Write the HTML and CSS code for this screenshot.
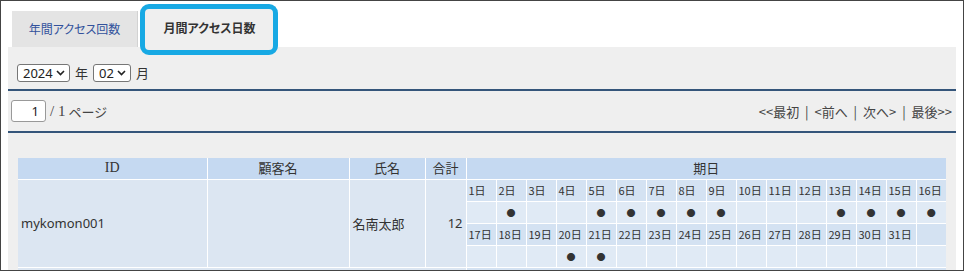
FILE: index.html
```html
<!DOCTYPE html>
<html lang="ja">

<head>
    <meta charset="UTF-8">
    <meta name="viewport" content="width=device-width, initial-scale=1.0">
    <title>月間アクセス日数</title>
    <link rel="stylesheet" href="styles.css">
</head>

<body>
    <div class="frame">
        <ul class="tabs">
            <li class="tab">年間アクセス回数</li>
            <li class="tab tab_on">月間アクセス日数</li>
        </ul><!-- .tabs end -->

        <div class="panel">
            <div class="period">
                <span class="sel sel_year">
                    <select>
                        <option>2024</option>
                    </select>
                    <svg viewBox="0 0 9 6" width="9" height="6"><path d="M1 1l3.5 3.5L8 1" fill="none" stroke="#222" stroke-width="1.6"/></svg>
                </span>
                <span>年</span>
                <span class="sel sel_month">
                    <select>
                        <option>02</option>
                    </select>
                    <svg viewBox="0 0 9 6" width="9" height="6"><path d="M1 1l3.5 3.5L8 1" fill="none" stroke="#222" stroke-width="1.6"/></svg>
                </span>
                <span>月</span>
            </div><!-- .period end -->

            <div class="pager">
                <div class="page_left">
                    <input type="text" class="page_input" value="1">
                    <span class="page_num">/ 1</span>
                    <span class="page_txt">ページ</span>
                </div>
                <div class="page_nav">&lt;&lt;最初 | &lt;前へ | 次へ&gt; | 最後&gt;&gt;</div>
            </div><!-- .pager end -->

            <div class="list">
                <table>
                    <colgroup>
                        <col style="width:189px">
                        <col style="width:142px">
                        <col style="width:76px">
                        <col style="width:41px">
                        <col span="16" style="width:30px">
                    </colgroup>
                    <thead>
                        <tr>
                            <th class="th_id">ID</th>
                            <th>顧客名</th>
                            <th>氏名</th>
                            <th>合計</th>
                            <th colspan="16">期日</th>
                        </tr>
                    </thead>
                    <tbody>
                        <tr>
                            <td class="c_main" rowspan="4">mykomon001</td>
                            <td class="c_main" rowspan="4"></td>
                            <td class="c_main" rowspan="4">名南太郎</td>
                            <td class="c_main c_num" rowspan="4">12</td>
                            <td class="c_day">1日</td>
                            <td class="c_day">2日</td>
                            <td class="c_day">3日</td>
                            <td class="c_day">4日</td>
                            <td class="c_day">5日</td>
                            <td class="c_day">6日</td>
                            <td class="c_day">7日</td>
                            <td class="c_day">8日</td>
                            <td class="c_day">9日</td>
                            <td class="c_day">10日</td>
                            <td class="c_day">11日</td>
                            <td class="c_day">12日</td>
                            <td class="c_day">13日</td>
                            <td class="c_day">14日</td>
                            <td class="c_day">15日</td>
                            <td class="c_day">16日</td>
                        </tr>
                        <tr>
                            <td class="c_dot"></td>
                            <td class="c_dot">●</td>
                            <td class="c_dot"></td>
                            <td class="c_dot"></td>
                            <td class="c_dot">●</td>
                            <td class="c_dot">●</td>
                            <td class="c_dot">●</td>
                            <td class="c_dot">●</td>
                            <td class="c_dot">●</td>
                            <td class="c_dot"></td>
                            <td class="c_dot"></td>
                            <td class="c_dot"></td>
                            <td class="c_dot">●</td>
                            <td class="c_dot">●</td>
                            <td class="c_dot">●</td>
                            <td class="c_dot">●</td>
                        </tr>
                        <tr>
                            <td class="c_day">17日</td>
                            <td class="c_day">18日</td>
                            <td class="c_day">19日</td>
                            <td class="c_day">20日</td>
                            <td class="c_day">21日</td>
                            <td class="c_day">22日</td>
                            <td class="c_day">23日</td>
                            <td class="c_day">24日</td>
                            <td class="c_day">25日</td>
                            <td class="c_day">26日</td>
                            <td class="c_day">27日</td>
                            <td class="c_day">28日</td>
                            <td class="c_day">29日</td>
                            <td class="c_day">30日</td>
                            <td class="c_day">31日</td>
                            <td class="c_day"></td>
                        </tr>
                        <tr>
                            <td class="c_dot"></td>
                            <td class="c_dot"></td>
                            <td class="c_dot"></td>
                            <td class="c_dot">●</td>
                            <td class="c_dot">●</td>
                            <td class="c_dot"></td>
                            <td class="c_dot"></td>
                            <td class="c_dot"></td>
                            <td class="c_dot"></td>
                            <td class="c_dot"></td>
                            <td class="c_dot"></td>
                            <td class="c_dot"></td>
                            <td class="c_dot"></td>
                            <td class="c_dot"></td>
                            <td class="c_dot"></td>
                            <td class="c_dot"></td>
                        </tr>
                        <tr>
                            <td class="c_main" colspan="4"></td>
                            <td class="c_day" colspan="16"></td>
                        </tr>
                    </tbody>
                </table>
            </div><!-- .list end -->
        </div><!-- .panel end -->
    </div><!-- .frame end -->
</body>

</html>
```

FILE: styles.css
```css
* {
    margin: 0;
    padding: 0;
    box-sizing: border-box;
}

li {
    list-style: none;
}

body {
    font-family: "Noto Sans", "Noto Sans CJK JP", sans-serif;
    font-size: 13px;
    color: #333;
    background-color: #fff;
}

.frame {
    width: 964px;
    height: 271px;
    border: 1px solid #444;
    padding: 0 7px;
    overflow: hidden;
}

/* tabs */
.tabs {
    display: flex;
    align-items: flex-end;
    padding: 5px 0 0 4px;
    gap: 5px;
}

.tabs .tab {
    width: 126px;
    height: 36px;
    line-height: 36px;
    text-align: center;
    background-color: #e4e4e4;
    border-right: 1px solid #d2d2d2;
    color: #32529c;
    font-family: "Noto Sans CJK JP", sans-serif;
    font-size: 12px;
    font-feature-settings: "palt";
}

.tabs .tab_on {
    position: relative;
    width: 133px;
    height: 41px;
    padding-top: 4px;
    background-color: #efefef;
    border-right: none;
    color: #333;
    font-weight: bold;
}

/* 강조 테두리 */
.tabs .tab_on::after {
    content: "";
    position: absolute;
    left: -3px;
    top: -2px;
    right: -2px;
    bottom: -8px;
    border: 5px solid #17a9e4;
    border-radius: 9px;
}

.panel {
    background-color: #efefef;
    height: 300px;
}

/* year / month */
.period {
    display: flex;
    align-items: center;
    gap: 5px;
    padding: 16px 9px 7px;
    border-bottom: 2px solid #34557a;
    font-family: "Noto Sans CJK JP", sans-serif;
}

.period .sel {
    position: relative;
    display: block;
}

.period select {
    appearance: none;
    -webkit-appearance: none;
    display: block;
    height: 18px;
    line-height: 16px;
    padding: 0 0 0 5px;
    border: 1px solid #767676;
    border-radius: 3px;
    background-color: #fff;
    color: #222;
    font-family: "Noto Sans", sans-serif;
    font-size: 13px;
}

.period .sel_year select {
    width: 53px;
}

.period .sel_month select {
    width: 38px;
}

.period .sel svg {
    position: absolute;
    right: 5px;
    top: 6px;
}

/* pager */
.pager {
    display: flex;
    justify-content: space-between;
    align-items: center;
    padding: 9px 4px 9px 3px;
    border-bottom: 2px solid #34557a;
}

.pager .page_left {
    display: flex;
    align-items: center;
    gap: 4px;
}

.pager .page_input {
    width: 35px;
    height: 22px;
    padding: 0 6px;
    border: 1px solid #999;
    border-radius: 3px;
    text-align: right;
    font-family: "Noto Sans", sans-serif;
    font-size: 13px;
    color: #222;
}

.pager .page_num {
    font-family: "Liberation Serif", serif;
    font-size: 15px;
    color: #444;
}

.pager .page_txt {
    margin-left: -1px;
    font-family: "Noto Sans CJK JP", sans-serif;
    font-size: 13px;
    color: #444;
}

.pager .page_nav {
    font-family: "Noto Sans CJK JP", sans-serif;
    word-spacing: 3px;
    color: #444;
}

/* table */
.list {
    padding: 25px 10px 0;
}

.list table {
    width: 928px;
    table-layout: fixed;
    border-collapse: collapse;
    border-style: hidden;
}

.list th {
    height: 21px;
    line-height: 20px;
    background-color: #c5d9f1;
    border: 1px solid #fff;
    font-weight: normal;
    font-family: "Noto Sans CJK JP", sans-serif;
    color: #333;
}

.list th.th_id {
    font-family: "Liberation Serif", serif;
    font-size: 14px;
}

.list td {
    border: 1px solid #fff;
    height: 22px;
    white-space: nowrap;
}

.list .c_main {
    background-color: #dce6f2;
    padding: 0 3px;
}

.list .c_num {
    text-align: right;
}

.list .c_day {
    background-color: #d4e2f2;
    padding: 0 0 0 2px;
    font-family: "Noto Sans CJK JP", sans-serif;
    font-size: 11px;
}

.list .c_dot {
    background-color: #e0eaf5;
    text-align: center;
    font-family: "Noto Sans CJK JP", sans-serif;
    font-size: 9px;
    color: #333;
}
```
